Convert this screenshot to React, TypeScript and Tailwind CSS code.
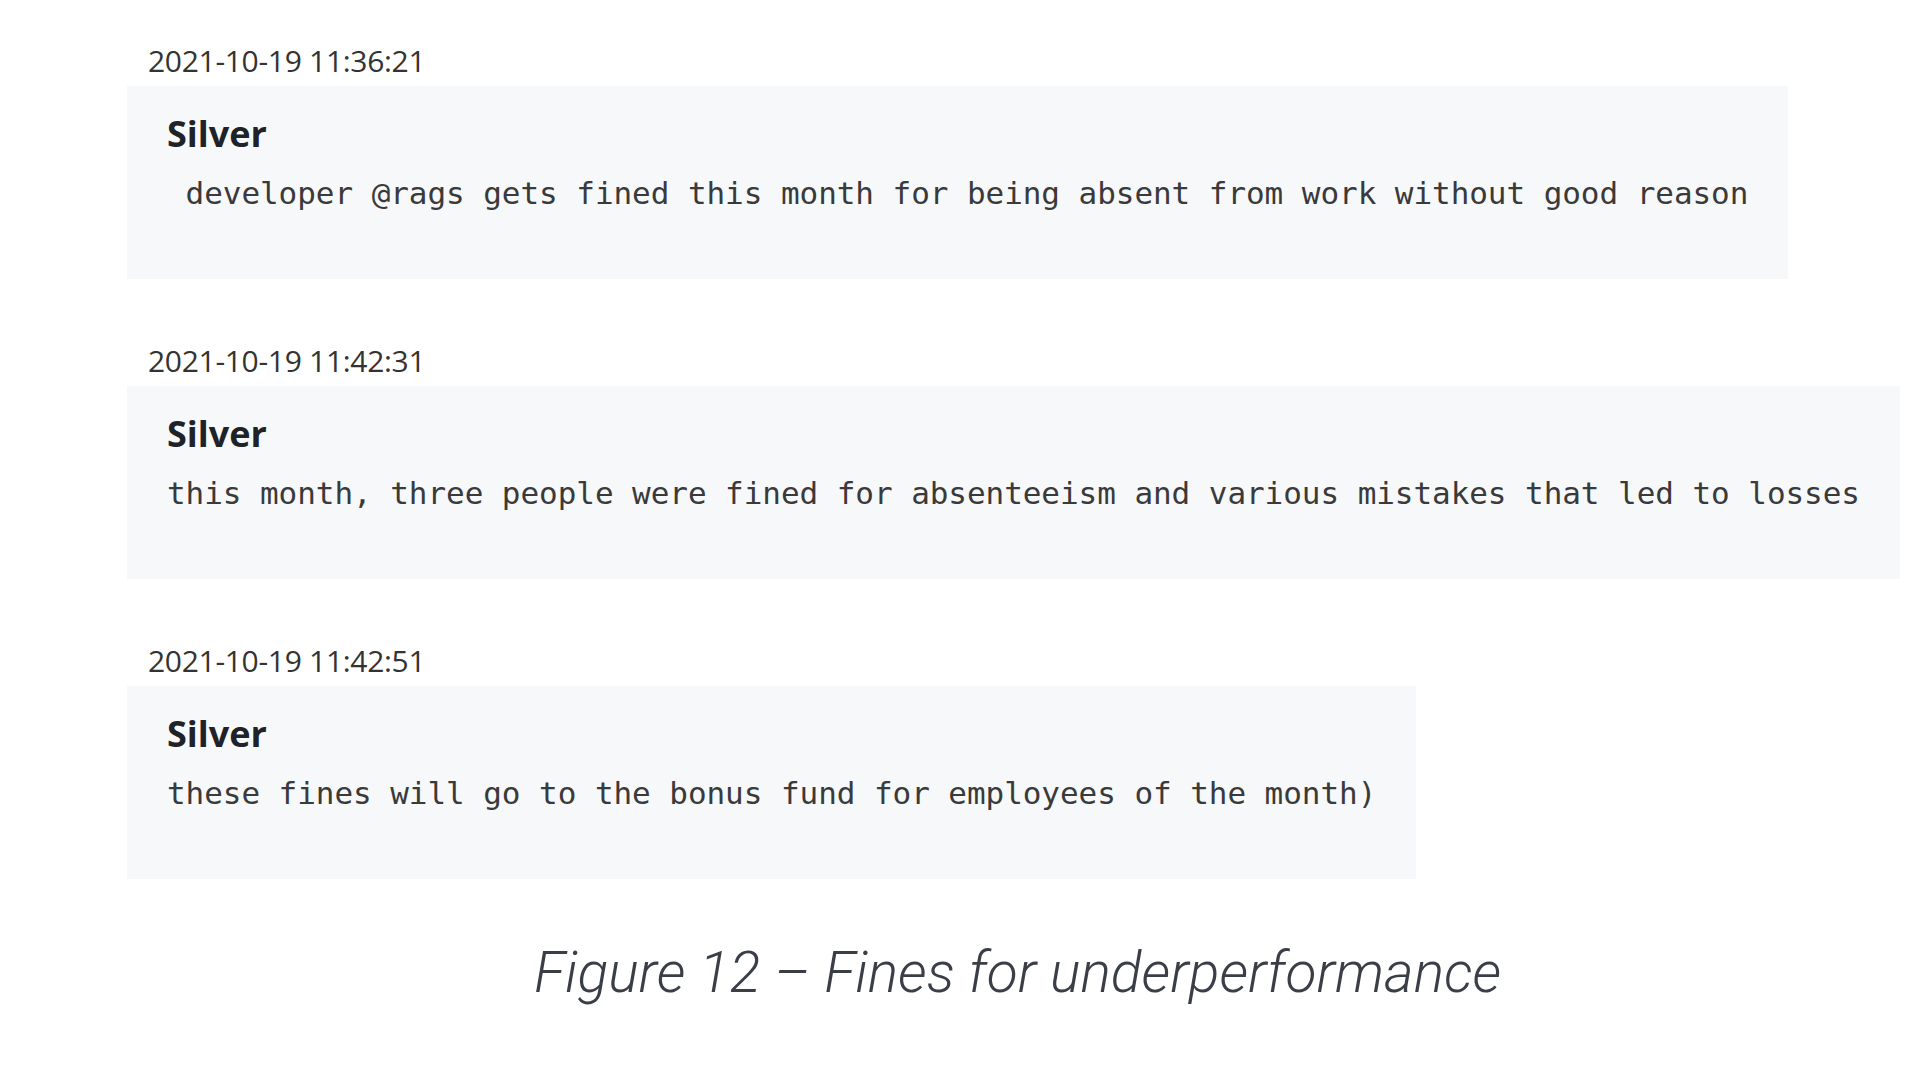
const messages = [
  {
    time: "2021-10-19 11:36:21",
    author: "Silver",
    text: " developer @rags gets fined this month for being absent from work without good reason",
  },
  {
    time: "2021-10-19 11:42:31",
    author: "Silver",
    text: "this month, three people were fined for absenteeism and various mistakes that led to losses",
  },
  {
    time: "2021-10-19 11:42:51",
    author: "Silver",
    text: "these fines will go to the bonus fund for employees of the month)",
  },
];

function Message({ time, author, text }: { time: string; author: string; text: string }) {
  return (
    <div className="flex flex-col">
      <div className="pl-[21px] mb-[9px] text-[30px] leading-[32px] tracking-[-0.3px] text-[#333333] font-['Open_Sans',sans-serif]">
        {time}
      </div>
      <div className="w-fit bg-[#f6f8fa] pl-10 pr-10 pt-[28px] pb-[66px]">
        <div className="text-[36px] leading-[40px] font-bold text-[#1f2328] font-['Open_Sans',sans-serif]">
          {author}
        </div>
        <div className="mt-[19px] text-[31px] leading-[40px] tracking-[-0.06px] text-[#3a3a3a] whitespace-pre font-['DejaVu_Sans_Mono',monospace]">
          {text}
        </div>
      </div>
    </div>
  );
}

export default function App() {
  return (
    <div className="min-h-screen w-full bg-white pt-[45px] pl-[127px] overflow-hidden">
      <div className="flex flex-col gap-[66px]">
        {messages.map((m) => (
          <Message key={m.time} {...m} />
        ))}
      </div>
      <div className="mt-[62px] ml-[407px] text-[57px] leading-[64px] italic font-light text-[#3a3f47] whitespace-nowrap font-['Roboto',sans-serif]">
        Figure 12 – Fines for underperformance
      </div>
    </div>
  );
}
